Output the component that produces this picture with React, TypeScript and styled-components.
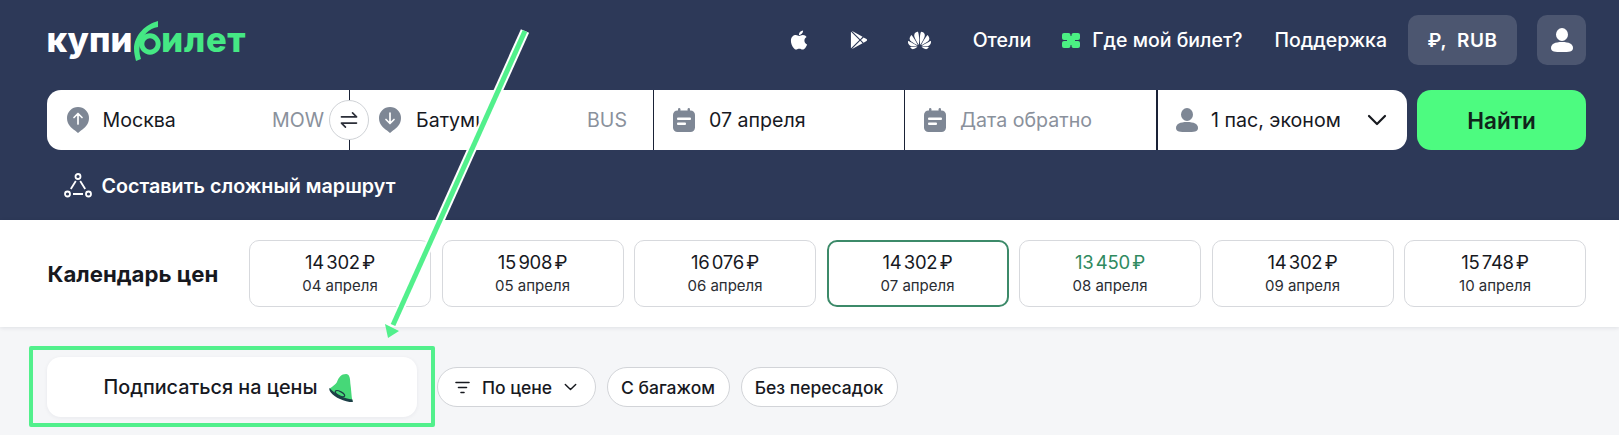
import React from 'react';
import styled, { createGlobalStyle } from 'styled-components';
import { FaApple } from 'react-icons/fa';
import { SiGoogleplay, SiHuawei } from 'react-icons/si';

const Global = createGlobalStyle`
  html, body { margin: 0; padding: 0; background: #f5f6f8; }
  body { font-family: Inter, "Noto Sans", "Liberation Sans", sans-serif; overflow: hidden; }
  * { box-sizing: border-box; }
`;

const Page = styled.div`
  position: relative;
  width: 1619px;
  height: 435px;
  overflow: hidden;
  background: #f5f6f8;
`;

const Header = styled.header`
  height: 220px;
  background: #2d3958;
  padding: 15px 33px 0 46.5px;
`;

const TopRow = styled.div`
  display: flex;
  align-items: center;
  height: 50px;
`;

const Logo = styled.div`
  display: flex;
  align-items: center;
  font-size: 34.5px;
  font-weight: 800;
  line-height: 50px;
  height: 50px;
`;

const LogoWhite = styled.span`
  color: #ffffff;
`;

const LogoGreen = styled.span`
  color: #45e884;
  letter-spacing: 0.7px;
`;

const LogoMark = styled.svg`
  width: 29px;
  height: 42px;
  flex: none;
`;

const Nav = styled.nav`
  margin-left: auto;
  display: flex;
  align-items: center;
`;

const StoreIcons = styled.div`
  display: flex;
  align-items: center;
  gap: 40px;
  color: #fff;
  margin-right: 42px;
`;

const NavLink = styled.a<{ $gap?: number }>`
  display: flex;
  align-items: center;
  gap: 12px;
  color: #fff;
  font-size: 19.5px;
  font-weight: 500;
  margin-right: ${p => p.$gap ?? 31}px;
  white-space: nowrap;
`;

const GhostButton = styled.button<{ $w: number; $mr?: number }>`
  width: ${p => p.$w}px;
  height: 50px;
  margin-right: ${p => p.$mr ?? 0}px;
  border: 0;
  border-radius: 10px;
  background: #4c5670;
  color: #fff;
  font: 600 19px Inter, sans-serif;
  letter-spacing: 0.5px;
  word-spacing: 5px;
  display: flex;
  align-items: center;
  justify-content: center;
`;

const SearchRow = styled.div`
  display: flex;
  gap: 10px;
  margin-top: 25px;
`;

const SearchBar = styled.div`
  display: grid;
  grid-template-columns: 302.5px 304px 251px 252px 251px;
  width: 1360.5px;
  height: 60px;
  border-radius: 14px;
  background: #fff;
`;

const Field = styled.div<{ $pl: number; $pr: number; $gap: number; $sep?: number }>`
  position: relative;
  display: flex;
  align-items: center;
  gap: ${p => p.$gap}px;
  padding: 0 ${p => p.$pr}px 0 ${p => p.$pl}px;
  border-left: ${p => p.$sep ?? 0}px solid #1a2236;
  font-size: 19.6px;
  color: #17191f;
  min-width: 0;
`;

const FieldValue = styled.span<{ $muted?: boolean }>`
  color: ${p => (p.$muted ? '#8a919c' : '#17191f')};
  white-space: nowrap;
`;

const FieldCode = styled.span`
  margin-left: auto;
  color: #8a919c;
`;

const FieldChevron = styled.svg`
  margin-left: auto;
  width: 20px;
  height: 12px;
  flex: none;
`;

const SwapButton = styled.button`
  position: absolute;
  right: -20px;
  top: 10px;
  z-index: 2;
  width: 40px;
  height: 40px;
  padding: 0;
  border-radius: 50%;
  border: 1px solid #cfd2d6;
  background: #fff;
  display: flex;
  align-items: center;
  justify-content: center;
`;

const FindButton = styled.button`
  width: 169px;
  height: 60px;
  border: 0;
  border-radius: 14px;
  background: #4dfb80;
  color: #10241a;
  font: 600 22.5px Inter, sans-serif;
`;

const RouteLink = styled.a`
  display: flex;
  align-items: center;
  gap: 10px;
  margin: 23px 0 0 17px;
  color: #fff;
  font-size: 19.7px;
  font-weight: 600;
  line-height: 24px;
`;

const CalendarSection = styled.section`
  height: 107px;
  background: #fff;
  padding: 20px 33px 0 47.5px;
  display: flex;
  align-items: flex-start;
  box-shadow: 0 1px 4px rgba(30, 40, 60, 0.1);
  position: relative;
`;

const CalendarTitle = styled.h2`
  margin: 0;
  width: 201.5px;
  flex: none;
  height: 67px;
  display: flex;
  align-items: center;
  font-size: 22.2px;
  font-weight: 700;
  color: #17191f;
`;

const Cards = styled.div`
  display: grid;
  grid-template-columns: repeat(7, 1fr);
  gap: 10.5px;
  flex: 1;
`;

const Card = styled.div<{ $selected?: boolean }>`
  height: 67px;
  border-radius: 10px;
  border: ${p => (p.$selected ? '2px solid #3c8a69' : '1px solid #d7d9dd')};
  background: #fff;
  display: flex;
  flex-direction: column;
  align-items: center;
  justify-content: center;
  gap: 3px;
`;

const Price = styled.div<{ $low?: boolean }>`
  font-size: 18.5px;
  line-height: 22px;
  letter-spacing: -0.3px;
  word-spacing: -2.5px;
  color: ${p => (p.$low ? '#2f8a5f' : '#17191f')};
`;

const CardDate = styled.div`
  font-size: 15px;
  line-height: 20px;
  color: #2a2d33;
`;

const FilterRow = styled.div`
  display: flex;
  align-items: center;
  gap: 20px;
  padding: 30px 0 0 46.5px;
`;

const SubscribeButton = styled.button`
  position: relative;
  width: 370px;
  height: 60px;
  border: 0;
  padding: 0 5px 0 0;
  border-radius: 14px;
  background: #fff;
  box-shadow: 0 1px 4px rgba(30, 40, 60, 0.06);
  display: flex;
  align-items: center;
  justify-content: center;
  gap: 11px;
  font: 500 19.8px Inter, sans-serif;
  color: #17191f;
`;

const HighlightFrame = styled.span`
  position: absolute;
  inset: -11px -18px -10px -18px;
  border: 4px solid #52f08c;
  border-radius: 2px;
  pointer-events: none;
`;

const Chips = styled.div`
  display: flex;
  gap: 11px;
`;

const Chip = styled.button<{ $w: number }>`
  width: ${p => p.$w}px;
  height: 40px;
  border: 1px solid #d2d4d8;
  border-radius: 20px;
  background: #fff;
  display: flex;
  align-items: center;
  justify-content: center;
  gap: 12px;
  font: 500 17.5px Inter, sans-serif;
  color: #17191f;
  white-space: nowrap;
  padding: 0;
`;

const ArrowOverlay = styled.svg`
  position: absolute;
  inset: 0;
  width: 1619px;
  height: 435px;
  pointer-events: none;
  z-index: 5;
`;

const GREY = '#7e8795';

const Pin = ({ down }: { down?: boolean }) => (
  <svg width="22" height="26" viewBox="0 0 22 26" style={{ flex: 'none' }}>
    <path d="M11 0a11 11 0 0 1 11 11c0 6-4 10-8 12.500L11 26l-3-2.500C4 21 0 17 0 11A11 11 0 0 1 11 0z" fill={GREY} />
    <path
      d={down ? 'M11 6v10M7 12.500l4 4 4-4' : 'M11 17V7M7 10.500l4-4 4 4'}
      stroke="#fff"
      strokeWidth="1.700"
      fill="none"
      strokeLinecap="round"
      strokeLinejoin="round"
    />
  </svg>
);

const CalendarIcon = () => (
  <svg width="22" height="24" viewBox="0 0 22 24" style={{ flex: 'none' }}>
    <rect x="0" y="2.500" width="22" height="21.500" rx="4.500" fill={GREY} />
    <rect x="5" y="0" width="2.400" height="6" rx="1.200" fill={GREY} />
    <rect x="14.600" y="0" width="2.400" height="6" rx="1.200" fill={GREY} />
    <rect x="4" y="9.500" width="14" height="2.400" rx="1" fill="#fff" />
    <rect x="4" y="14.500" width="9" height="2.400" rx="1" fill="#fff" />
  </svg>
);

const PersonIcon = ({ color }: { color: string }) => (
  <svg width="22" height="24" viewBox="0 0 22 24" style={{ flex: 'none' }}>
    <ellipse cx="11" cy="6.500" rx="6" ry="6.500" fill={color} />
    <path d="M0 20c0-4 4-6 11-6s11 2 11 6-4 4-11 4-11 0-11-4z" fill={color} />
  </svg>
);

const Clover = () => (
  <svg width="18" height="15" viewBox="0 0 18 15">
    <g fill="#4bf083">
      <rect x="0" y="0" width="8.500" height="7" rx="2" />
      <rect x="9.500" y="0" width="8.500" height="7" rx="2" />
      <rect x="0" y="8" width="8.500" height="7" rx="2" />
      <rect x="9.500" y="8" width="8.500" height="7" rx="2" />
      <rect x="5" y="3" width="8" height="9" />
    </g>
  </svg>
);

const RouteIcon = () => (
  <svg width="28" height="25" viewBox="0 0 28 25" fill="none" stroke="#fff" strokeWidth="1.800" style={{ flex: 'none' }}>
    <circle cx="14" cy="3.500" r="2.500" />
    <circle cx="3.500" cy="21" r="2.500" />
    <circle cx="24.500" cy="21" r="2.500" />
    <path d="M11.800 8L6.800 16M16.200 8L21.200 16M9 21h10" />
  </svg>
);

const Bell = () => (
  <svg width="26" height="29" viewBox="0 0 24 28" style={{ flex: 'none' }}>
    <path d="M17 1C12 1 10 4 8 9 7 11 4 13 1 15 3 21 14 27 23 27 22 22 22 17 21 10 21 5 20 1 17 1z" fill="#46d878" />
    <path d="M1 14.500C.4 15.500.8 17 2 18.500 6 23.500 15 28 23.500 28L23 25.500C15 25 7 21 1 14.500z" fill="#1c3f46" />
    <ellipse cx="11" cy="20" rx="5" ry="2" transform="rotate(28 11 20)" fill="none" stroke="#1c3f46" strokeWidth="1.200" />
  </svg>
);

const Chevron = ({ w, h }: { w: number; h: number }) => (
  <svg width={w} height={h} viewBox="0 0 20 12" fill="none" stroke="#17191f" strokeWidth="2.200" strokeLinecap="round" strokeLinejoin="round" style={{ flex: 'none' }}>
    <path d="M2 2l8 8 8-8" />
  </svg>
);

const cards = [
  { price: '14 302 ₽', date: '04 апреля' },
  { price: '15 908 ₽', date: '05 апреля' },
  { price: '16 076 ₽', date: '06 апреля' },
  { price: '14 302 ₽', date: '07 апреля', selected: true },
  { price: '13 450 ₽', date: '08 апреля', low: true },
  { price: '14 302 ₽', date: '09 апреля' },
  { price: '15 748 ₽', date: '10 апреля' },
];

export default function App() {
  return (
    <Page>
      <Global />
      <Header>
        <TopRow>
          <Logo>
            <LogoWhite>купи</LogoWhite>
            <LogoMark viewBox="0 0 29 42">
              <circle cx="18" cy="25" r="8.200" fill="none" stroke="#45e884" strokeWidth="5" />
              <path d="M26 2C14 5 2 16 2 30c0 4 1 8 2 12l5-2c-2-6-2-10-1-14C10 17 17 9 26 8z" fill="#45e884" />
            </LogoMark>
            <LogoGreen>илет</LogoGreen>
          </Logo>
          <Nav>
            <StoreIcons>
              <FaApple size={22} />
              <SiGoogleplay size={18} />
              <SiHuawei size={23} />
            </StoreIcons>
            <NavLink>Отели</NavLink>
            <NavLink $gap={32}>
              <Clover />
              Где мой билет?
            </NavLink>
            <NavLink $gap={21}>Поддержка</NavLink>
            <GhostButton $w={109} $mr={20}>₽, RUB</GhostButton>
            <GhostButton $w={49}>
              <PersonIcon color="#fff" />
            </GhostButton>
          </Nav>
        </TopRow>
        <SearchRow>
          <SearchBar>
            <Field $pl={20} $pr={25} $gap={14}>
              <Pin />
              <FieldValue>Москва</FieldValue>
              <FieldCode>MOW</FieldCode>
              <SwapButton aria-label="swap">
                <svg width="18" height="16" viewBox="0 0 20 18" fill="none" stroke="#2b2e38" strokeWidth="1.800" strokeLinecap="round" strokeLinejoin="round">
                  <path d="M1.500 5.500h17M14 1l4.500 4.500M18.500 12.500h-17M6 17l-4.500-4.500" />
                </svg>
              </SwapButton>
            </Field>
            <Field $pl={29} $pr={26} $gap={15} $sep={1}>
              <Pin down />
              <FieldValue>Батуми</FieldValue>
              <FieldCode>BUS</FieldCode>
            </Field>
            <Field $pl={19} $pr={20} $gap={14} $sep={1}>
              <CalendarIcon />
              <FieldValue>07 апреля</FieldValue>
            </Field>
            <Field $pl={19} $pr={20} $gap={14} $sep={1}>
              <CalendarIcon />
              <FieldValue $muted>Дата обратно</FieldValue>
            </Field>
            <Field $pl={18} $pr={20} $gap={13} $sep={2}>
              <PersonIcon color={GREY} />
              <FieldValue>1 пас, эконом</FieldValue>
              <FieldChevron viewBox="0 0 20 12" fill="none" stroke="#17191f" strokeWidth="2.200" strokeLinecap="round" strokeLinejoin="round">
                <path d="M2 2l8 8 8-8" />
              </FieldChevron>
            </Field>
          </SearchBar>
          <FindButton>Найти</FindButton>
        </SearchRow>
        <RouteLink>
          <RouteIcon />
          Составить сложный маршрут
        </RouteLink>
      </Header>
      <CalendarSection>
        <CalendarTitle>Календарь цен</CalendarTitle>
        <Cards>
          {cards.map(c => (
            <Card key={c.date} $selected={c.selected}>
              <Price $low={c.low}>{c.price}</Price>
              <CardDate>{c.date}</CardDate>
            </Card>
          ))}
        </Cards>
      </CalendarSection>
      <FilterRow>
        <SubscribeButton>
          Подписаться на цены
          <Bell />
          <HighlightFrame />
        </SubscribeButton>
        <Chips>
          <Chip $w={159}>
            <svg width="15" height="13" viewBox="0 0 15 13" fill="none" stroke="#17191f" strokeWidth="1.600" strokeLinecap="round" style={{ flex: 'none' }}>
              <path d="M1 1.500h13M3.500 6.500h8M6 11.500h3" />
            </svg>
            По цене
            <Chevron w={13} h={8} />
          </Chip>
          <Chip $w={123}>С багажом</Chip>
          <Chip $w={157}>Без пересадок</Chip>
        </Chips>
      </FilterRow>
      <ArrowOverlay viewBox="0 0 1619 435">
        <line x1="525" y1="31" x2="396" y2="318" stroke="#ffffff" strokeWidth="9" />
        <line x1="525" y1="31" x2="393" y2="325" stroke="#52f08c" strokeWidth="5" />
        <polygon points="388,338 385,324 399,331" fill="#52f08c" />
      </ArrowOverlay>
    </Page>
  );
}
